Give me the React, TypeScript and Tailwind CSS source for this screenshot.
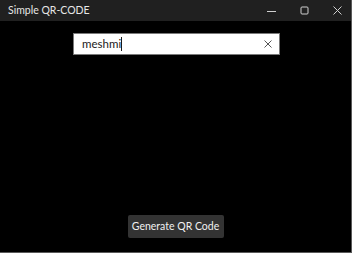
import React from "react";

export default function App() {
  return (
    <div
      className="w-[352px] h-[253px] bg-black flex flex-col border-r border-b border-[#5a5a5a] overflow-hidden"
      style={{ fontFamily: 'Lato, "Noto Sans", sans-serif' }}
    >
      <div className="h-[21px] bg-[#202020] flex items-center shrink-0">
        <span className="pl-[8px] text-[10.5px] text-[#e6e6e6] leading-none flex-1">Simple QR-CODE</span>
        <div className="flex items-center h-full pr-[9px] gap-[24px]">
          <svg width="9" height="9" viewBox="0 0 9 9">
            <line x1="0" y1="5.5" x2="9" y2="5.5" stroke="#d0d0d0" strokeWidth="1" />
          </svg>
          <svg width="9" height="9" viewBox="0 0 9 9">
            <rect x="1" y="1" width="7" height="7" rx="1" fill="none" stroke="#d0d0d0" strokeWidth="1" />
          </svg>
          <svg width="9" height="9" viewBox="0 0 9 9">
            <path d="M0.5 0.5 L8.5 8.5 M8.5 0.5 L0.5 8.5" stroke="#d0d0d0" strokeWidth="1" />
          </svg>
        </div>
      </div>
      <div className="flex-1 flex flex-col items-center">
        <div className="mt-[12px] ml-[2px] w-[207px] h-[22px] bg-white border border-[#7a7a7a] flex items-center">
          <span className="pl-[8px] text-[11.5px] text-[#1a1a1a] leading-none">meshmi</span>
          <span className="w-[1px] h-[14px] bg-[#1a1a1a]" />
          <span className="flex-1" />
          <svg width="8" height="8" viewBox="0 0 8 8" className="mr-[7px]">
            <path d="M0.5 0.5 L7.5 7.5 M7.5 0.5 L0.5 7.5" stroke="#555" strokeWidth="1" />
          </svg>
        </div>
        <div className="flex-1" />
        <button className="mb-[14px] w-[96px] h-[23px] bg-[#333333] text-[#f0f0f0] text-[10.5px] leading-none whitespace-nowrap flex items-center justify-center rounded-[2px]">
          Generate QR Code
        </button>
      </div>
    </div>
  );
}
